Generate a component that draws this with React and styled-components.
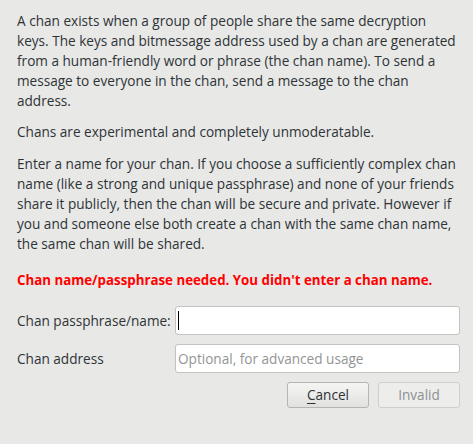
import React from "react";
import styled, { createGlobalStyle } from "styled-components";

const Global = createGlobalStyle`
  html, body { margin: 0; padding: 0; background: #e8e8e7; }
  body { font-family: "Open Sans", "Noto Sans", sans-serif; }
`;

const Dialog = styled.div`
  width: 473px;
  height: 444px;
  box-sizing: border-box;
  padding: 11px 13px 0 17px;
  background: #e8e8e7;
  color: #2e3436;
  font-size: 13.6px;
  line-height: 20px;
  display: flex;
  flex-direction: column;
`;

const Para = styled.p`
  margin: 0 0 ${(p) => p.$gap}px 0;
`;

const Line = styled.span`
  display: block;
  white-space: nowrap;
`;

const Error = styled.p`
  margin: 0;
  color: #f00;
  font-weight: 700;
  font-size: 13.3px;
  white-space: nowrap;
`;

const Form = styled.div`
  display: grid;
  grid-template-columns: 158px 285px;
  row-gap: 9px;
  align-items: center;
  margin-top: 16px;
`;

const Label = styled.label`
  white-space: nowrap;
`;

const FieldWrap = styled.div`
  position: relative;
  width: 285px;
  height: 29px;
`;

const Field = styled.input`
  box-sizing: border-box;
  height: 29px;
  width: 285px;
  border: 1px solid #c3c3bf;
  border-radius: 3px;
  background: #fff;
  font: inherit;
  color: #2e3436;
  padding: 0 2px;
  outline: none;
  &::placeholder { color: #929595; }
`;

const Caret = styled.span`
  position: absolute;
  left: 3px;
  top: 5px;
  width: 1px;
  height: 19px;
  background: #000;
  pointer-events: none;
`;

const Buttons = styled.div`
  display: flex;
  justify-content: flex-end;
  gap: 9px;
  margin-top: 9px;
`;

const Button = styled.button`
  box-sizing: border-box;
  width: 82px;
  height: 26px;
  border-radius: 3px;
  font: inherit;
  padding: 0;
  border: 1px solid ${(p) => (p.disabled ? "#cfcfcd" : "#b5b5b2")};
  background: ${(p) =>
    p.disabled ? "#ededec" : "linear-gradient(#f5f5f4, #e1e1df)"};
  color: ${(p) => (p.disabled ? "#8d9091" : "#2e3436")};
  u { text-decoration-thickness: 1px; text-underline-offset: 3px; }
`;

const intro = [
  "A chan exists when a group of people share the same decryption",
  "keys. The keys and bitmessage address used by a chan are generated",
  "from a human-friendly word or phrase (the chan name). To send a",
  "message to everyone in the chan, send a message to the chan",
  "address.",
];

const naming = [
  "Enter a name for your chan. If you choose a sufficiently complex chan",
  "name (like a strong and unique passphrase) and none of your friends",
  "share it publicly, then the chan will be secure and private. However if",
  "you and someone else both create a chan with the same chan name,",
  "the same chan will be shared.",
];

export default function App() {
  return (
    <>
      <Global />
      <Dialog>
        <Para $gap={11}>
          {intro.map((l) => (
            <Line key={l}>{l}</Line>
          ))}
        </Para>
        <Para $gap={12}>Chans are experimental and completely unmoderatable.</Para>
        <Para $gap={16}>
          {naming.map((l) => (
            <Line key={l}>{l}</Line>
          ))}
        </Para>
        <Error>Chan name/passphrase needed. You didn't enter a chan name.</Error>
        <Form>
          <Label htmlFor="name">Chan passphrase/name:</Label>
          <FieldWrap>
            <Field id="name" />
            <Caret />
          </FieldWrap>
          <Label htmlFor="addr">Chan address</Label>
          <FieldWrap>
            <Field id="addr" placeholder="Optional, for advanced usage" />
          </FieldWrap>
        </Form>
        <Buttons>
          <Button>
            <u>C</u>ancel
          </Button>
          <Button disabled>Invalid</Button>
        </Buttons>
      </Dialog>
    </>
  );
}
